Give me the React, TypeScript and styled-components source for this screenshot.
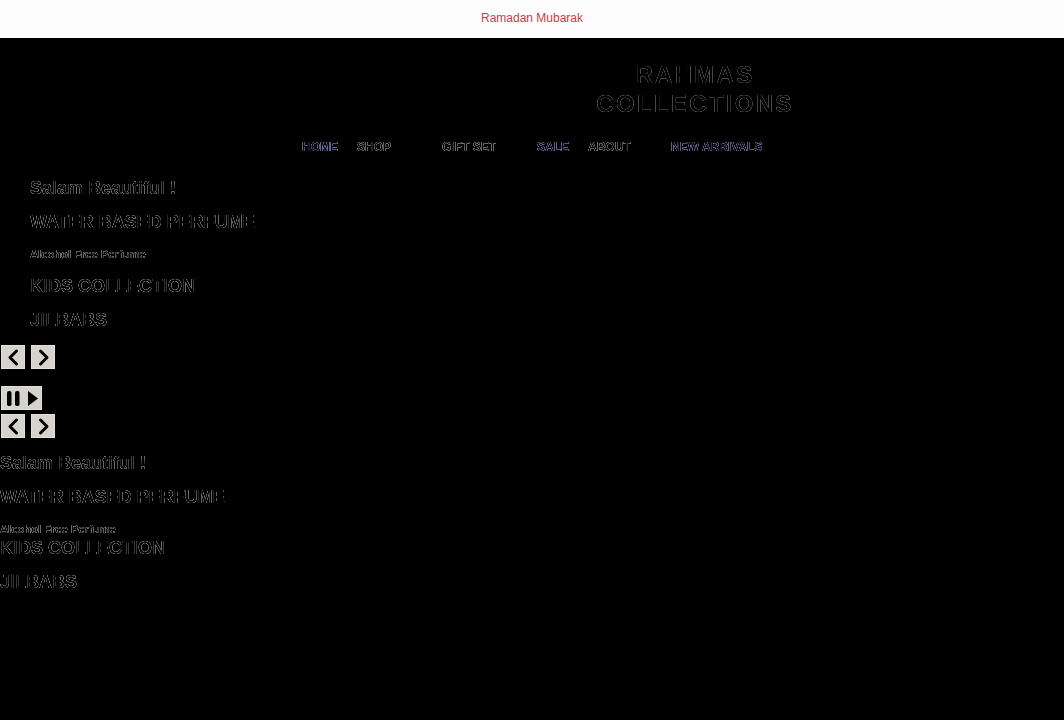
import React from "react";
import styled, { createGlobalStyle, css } from "styled-components";

const Global = createGlobalStyle`
  html, body { margin: 0; padding: 0; background: #000; }
  body { font-family: "Liberation Sans", Arial, sans-serif; color: #000; min-height: 720px; }
`;

const hollow = (c: string) => css`
  color: #000;
  will-change: transform;
  text-shadow: 0 0 0 ${c}, 0 0 0 ${c};
`;

const Banner = styled.div`
  height: 38px;
  padding-bottom: 2px;
  box-sizing: border-box;
  background: #fdfdfd;
  display: flex;
  align-items: center;
  justify-content: center;
  color: #cf3b45;
  font-size: 12px;
`;

const Header = styled.header`
  display: flex;
  flex-direction: column;
  align-items: center;
  padding-top: 22px;
`;

const Title = styled.h1`
  margin: 0 0 0 325px;
  width: 220px;
  text-align: center;
  font-size: 24px;
  line-height: 29px;
  font-weight: 700;
  letter-spacing: 2.3px;
  color: #000;
  will-change: transform;
  text-shadow: 0 0 0 #fff;
`;

const Nav = styled.nav`
  display: flex;
  margin: 19px 0 0 302px;
  align-self: flex-start;
  font-size: 12px;
  font-weight: 700;
  line-height: 20px;
`;

const NavItem = styled.a<{ $blue?: boolean; $w: number }>`
  width: ${(p) => p.$w}px;
  flex: none;
  white-space: nowrap;
  ${(p) =>
    p.$blue
      ? css`
          color: #000;
          will-change: transform;
          text-shadow: 0 0 0 #a8a8ff, 0 0 0 #a8a8ff, 0 0 0 #a8a8ff, 0 0 0 #a8a8ff, 0 0 0 #a8a8ff;
        `
      : hollow("#fff")}
`;

const Slides = styled.div<{ $indent?: boolean }>`
  padding-left: ${(p) => (p.$indent ? 30 : 0)}px;
`;

const Line = styled.p<{ $mb?: number }>`
  margin: 0 0 ${(p) => p.$mb ?? 12}px;
  font-size: 18px;
  font-weight: 700;
  line-height: 22px;
  ${hollow("#fff")}
`;

const SmallLine = styled.p<{ $mb: number }>`
  margin: 0 0 ${(p) => p.$mb}px;
  font-size: 11.2px;
  font-weight: 700;
  line-height: 16px;
  ${hollow("#fff")}
`;

const Controls = styled.div`
  display: flex;
  gap: 6px;
  padding-left: 1px;
`;

const CtrlButton = styled.button<{ $wide?: boolean }>`
  width: ${(p) => (p.$wide ? 41 : 24)}px;
  height: 24px;
  padding: 0;
  border: 0;
  background: #d5d3cc;
  box-shadow: inset 0 0 0 1px #e2e0da;
  display: block;
`;

const Icon = styled.svg`
  display: block;
`;

const Chevron = ({ dir }: { dir: "l" | "r" }) => (
  <Icon width="24" height="24" viewBox="0 0 24 24">
    <path
      d={dir === "l" ? "M15.5 6 L9 12.5 L15.5 19" : "M9.5 6 L16 12.5 L9.5 19"}
      fill="none"
      stroke="#000"
      strokeWidth="3"
      strokeLinecap="round"
      strokeLinejoin="round"
    />
  </Icon>
);

const PausePlay = () => (
  <Icon width="41" height="24" viewBox="0 0 41 24">
    <rect x="6" y="5" width="4.5" height="15" rx="1.8" fill="#000" />
    <rect x="14" y="5" width="4.5" height="15" rx="1.8" fill="#000" />
    <path d="M27 5 L37 12.5 L27 20 Z" fill="#000" />
  </Icon>
);

const Arrows = () => (
  <Controls>
    <CtrlButton aria-label="Previous"><Chevron dir="l" /></CtrlButton>
    <CtrlButton aria-label="Next"><Chevron dir="r" /></CtrlButton>
  </Controls>
);

const TopSlides = styled(Slides)`
  margin-top: 20px;
`;

const Stack = styled.div`
  margin-top: 17px;
  display: flex;
  flex-direction: column;
  gap: 4px;
`;

const LastSlides = styled(Slides)`
  margin-top: 14px;
`;

export default function App() {
  return (
    <>
      <Global />
      <Banner>Ramadan Mubarak</Banner>
      <Header>
        <Title>RAHMAS COLLECTIONS</Title>
        <Nav>
          <NavItem $blue $w={55}>HOME</NavItem>
          <NavItem $w={85}>SHOP</NavItem>
          <NavItem $w={95}>GIFT SET</NavItem>
          <NavItem $blue $w={51}>SALE</NavItem>
          <NavItem $w={83}>ABOUT</NavItem>
          <NavItem $blue $w={100}>NEW ARRIVALS</NavItem>
        </Nav>
      </Header>
      <TopSlides $indent>
        <Line>Salam Beautiful !</Line>
        <Line $mb={13}>WATER BASED PERFUME</Line>
        <SmallLine $mb={13}>Alcohol Free Perfume</SmallLine>
        <Line>KIDS COLLECTION</Line>
        <Line $mb={14}>JILBABS</Line>
      </TopSlides>
      <Arrows />
      <Stack>
        <Controls>
          <CtrlButton $wide aria-label="Pause or play"><PausePlay /></CtrlButton>
        </Controls>
        <Arrows />
      </Stack>
      <LastSlides>
        <Line>Salam Beautiful !</Line>
        <Line $mb={13}>WATER BASED PERFUME</Line>
        <SmallLine $mb={0}>Alcohol Free Perfume</SmallLine>
        <Line>KIDS COLLECTION</Line>
        <Line>JILBABS</Line>
      </LastSlides>
    </>
  );
}
